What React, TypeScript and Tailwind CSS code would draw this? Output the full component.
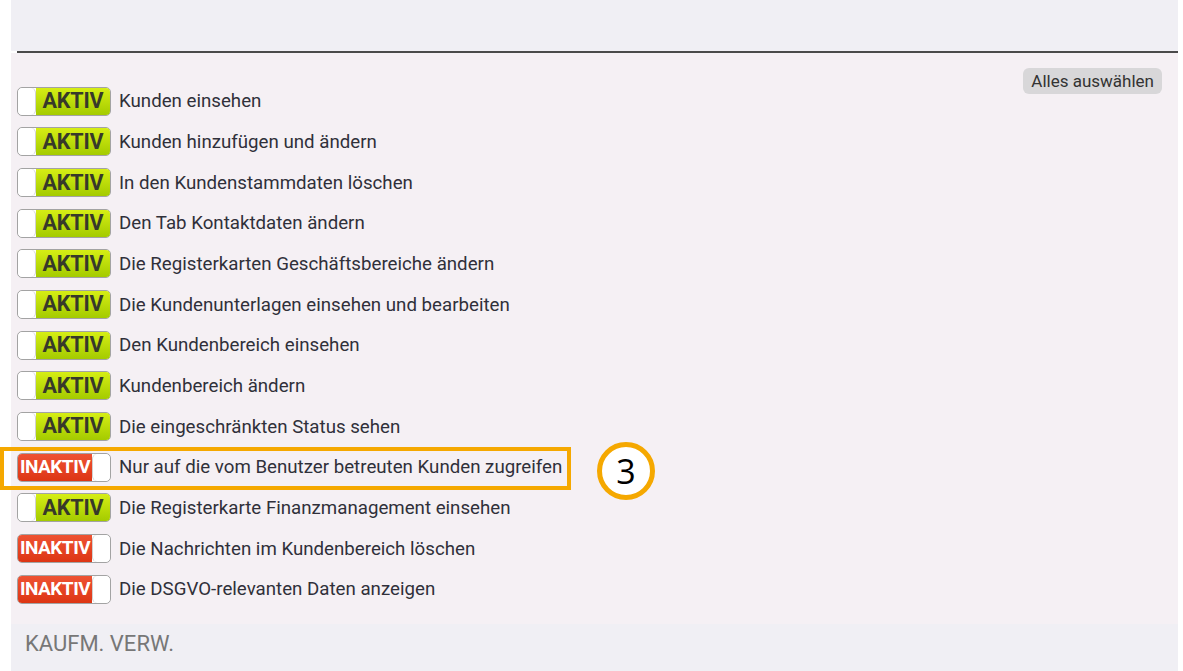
import React from "react";

interface Permission {
	label: string;
	active: boolean;
}

const permissions: Permission[] = [
	{ label: "Kunden einsehen", active: true },
	{ label: "Kunden hinzufügen und ändern", active: true },
	{ label: "In den Kundenstammdaten löschen", active: true },
	{ label: "Den Tab Kontaktdaten ändern", active: true },
	{ label: "Die Registerkarten Geschäftsbereiche ändern", active: true },
	{ label: "Die Kundenunterlagen einsehen und bearbeiten", active: true },
	{ label: "Den Kundenbereich einsehen", active: true },
	{ label: "Kundenbereich ändern", active: true },
	{ label: "Die eingeschränkten Status sehen", active: true },
	{ label: "Nur auf die vom Benutzer betreuten Kunden zugreifen", active: false },
	{ label: "Die Registerkarte Finanzmanagement einsehen", active: true },
	{ label: "Die Nachrichten im Kundenbereich löschen", active: false },
	{ label: "Die DSGVO-relevanten Daten anzeigen", active: false },
];

const Toggle = ({ active }: { active: boolean }) => (
	<div className="flex h-[29px] w-[94px] shrink-0 overflow-hidden rounded-[5px] border border-[#a3a3a3] bg-white">
		{active ? (
			<>
				<div className="w-[18px] shrink-0 rounded-[5px] border-r border-[#d0d0d0] bg-white" />
				<div className="flex flex-1 items-center justify-center bg-gradient-to-b from-[#d6ee14] to-[#a4cb00] text-[21.5px] font-bold tracking-[-0.2px] text-[#37392a]">
					AKTIV
				</div>
			</>
		) : (
			<>
				<div className="flex flex-1 items-center justify-center bg-gradient-to-b from-[#ee5232] to-[#dd3513] text-[19px] font-bold tracking-[-0.5px] text-white">
					INAKTIV
				</div>
				<div className="w-[18px] shrink-0 rounded-[5px] border-l border-[#d0d0d0] bg-white" />
			</>
		)}
	</div>
);

export default function App() {
	return (
		<div
			className="relative h-[671px] w-[1183px] overflow-hidden bg-white"
			style={{ fontFamily: "Roboto, 'Liberation Sans', sans-serif" }}
		>
			<div className="ml-[11px] mr-[5px] flex h-full flex-col">
				<div className="h-[51px] bg-[#f0eff4]" />
				<div className="ml-[6px] h-[2px] bg-[#4a4a4a]" />
				<div className="bg-[#f5f0f4] pb-[14px]">
					<div className="float-right mr-[16px] mt-[15px] rounded-[6px] bg-[#d8d7d9] px-[8px] py-[3px] text-[17px] leading-[20px] text-[#333]">
						Alles auswählen
					</div>
					<div className="pt-[28px]">
						{permissions.map((p) => (
							<div key={p.label} className="flex h-[40.67px] items-center gap-[8px] pl-[6px]">
								<Toggle active={p.active} />
								<span className="text-[18.7px] leading-[22px] text-[#30303a]">{p.label}</span>
							</div>
						))}
					</div>
				</div>
				<div className="flex-1 bg-[#f0eff4] pl-[14px] pt-[3px] text-[22px] text-[#777]">KAUFM. VERW.</div>
			</div>

			{/* annotation overlay */}
			<div className="absolute left-0 top-[447px] h-[43px] w-[571px] border-[4px] border-[#f5a800]" />
			<div
				className="absolute left-[597px] top-[442px] flex h-[58px] w-[58px] items-center justify-center rounded-full border-[5px] border-[#f5a800] bg-white text-[34px] text-black"
				style={{ fontFamily: "'Open Sans', sans-serif" }}
			>
				3
			</div>
		</div>
	);
}
